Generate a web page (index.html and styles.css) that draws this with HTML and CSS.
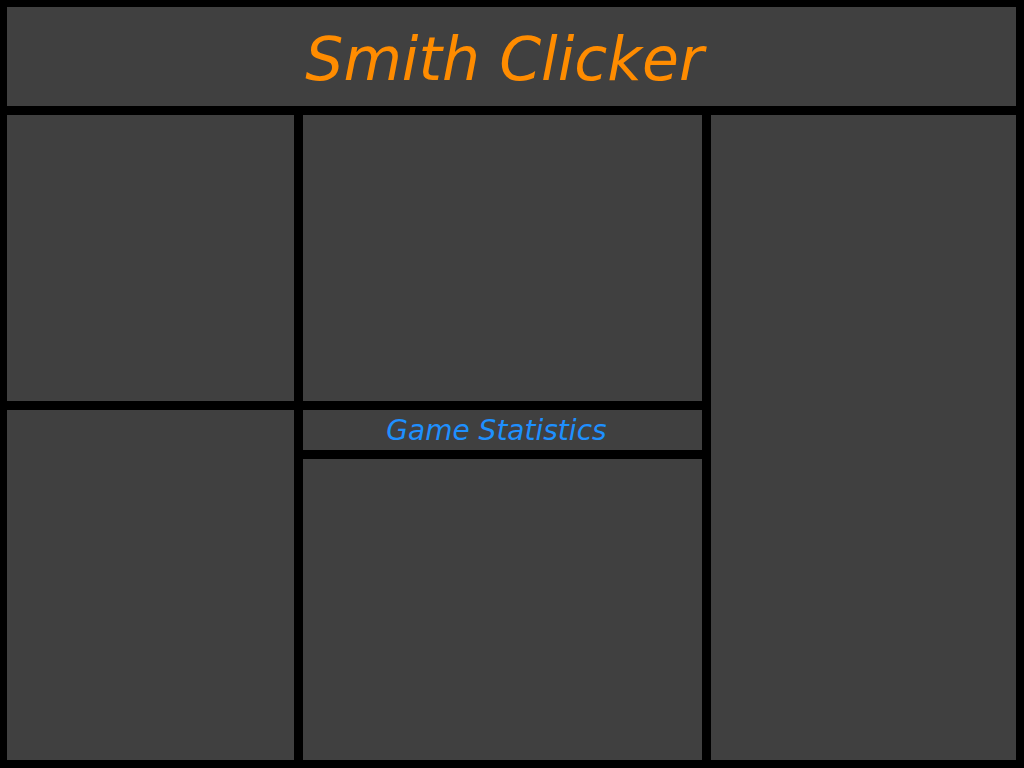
FILE: index.html
```html
<!DOCTYPE html>
<html lang="en">
<head>
  <meta charset="UTF-8" />
  <meta name="viewport" content="width=device-width, initial-scale=1" />
  <title>Smith Clicker</title>
  <link rel="stylesheet" href="styles.css">
</head>
<body>

  <div class="layout">
    <header class="panel title">
      <h1>Smith Clicker</h1>
    </header>

    <div class="panel upgrades"></div>
    <div class="panel clicker"></div>
    <div class="panel shop"></div>
    <div class="panel achievements"></div>
    <div class="panel stats-head">
      <h2>Game Statistics</h2>
    </div>
    <div class="panel stats"></div>
  </div>

</body>
</html>
```

FILE: styles.css
```css
html, body {
  margin: 0;
  padding: 0;
  background: #000;
}

body {
  font-family: "Comic Sans MS", "DejaVu Sans", sans-serif;
  width: 1024px;
  height: 768px;
  overflow: hidden;
}

.layout {
  display: grid;
  grid-template-columns: 287px 399px 305px;
  grid-template-rows: 99px 286px 40px 301px;
  gap: 9px;
  padding: 7px 8px 8px 7px;
}

.panel {
  background: #404040;
}

.title {
  grid-column: 1 / 4;
  display: flex;
  align-items: center;
  justify-content: center;
}

.title h1 {
  margin: 4px 14px 0 0;
  font-size: 60px;
  font-weight: normal;
  font-style: italic;
  color: #ff8c00;
}

.upgrades {
  grid-column: 1;
  grid-row: 2;
}

.clicker {
  grid-column: 2;
  grid-row: 2;
}

.shop {
  grid-column: 3;
  grid-row: 2 / 5;
}

.achievements {
  grid-column: 1;
  grid-row: 3 / 5;
}

.stats-head {
  grid-column: 2;
  grid-row: 3;
  display: flex;
  align-items: center;
  justify-content: center;
}

.stats-head h2 {
  margin: 0 12px 0 0;
  font-size: 28px;
  font-weight: normal;
  font-style: italic;
  color: #1e90ff;
}

.stats {
  grid-column: 2;
  grid-row: 4;
}
```
